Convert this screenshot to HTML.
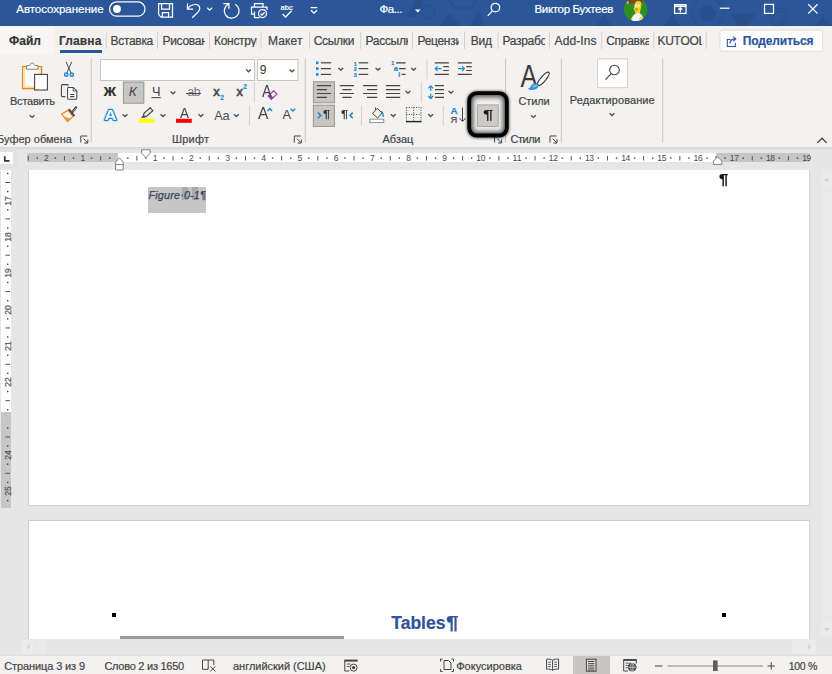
<!DOCTYPE html>
<html lang="ru"><head><meta charset="utf-8"><title>Word</title>
<style>
html,body{margin:0;padding:0;background:#e6e6e6;}
body{font-family:"Liberation Sans",sans-serif;color:#444;}
#app{position:relative;width:832px;height:674px;overflow:hidden;background:#e6e6e6;}
#app div{position:absolute;box-sizing:border-box;}
.t{white-space:nowrap;-webkit-text-stroke:0.200px currentColor;}
#ic{position:absolute;left:0;top:0;}

</style></head><body>
<div id="app">
<div style="left:0;top:0;width:832px;height:26px;background:#2b579a"></div>
<div style="left:0;top:26px;width:832px;height:121px;background:#f3f2f1"></div>
<div style="left:0;top:147px;width:832px;height:3px;background:linear-gradient(#d6d6d6,#e4e4e4)"></div>
<div style="left:0;top:26px;width:54px;height:29px;background:#f8f7f6"></div>
<div style="left:59.5px;top:50px;width:42px;height:2.5px;background:#2b579a"></div>
<!-- pages -->
<div style="left:28px;top:170px;width:782px;height:336px;background:#fff;border:1px solid #d0d0d0;border-top:none"></div>
<div style="left:28px;top:520px;width:782px;height:140px;background:#fff;border:1px solid #d0d0d0"></div>
<!-- selection -->
<div style="left:147.75px;top:187px;width:58.25px;height:25.75px;background:#c6c6c6"></div>
<div style="left:182.25px;top:187px;width:5.5px;height:13px;background:#a9a9a9"></div>
<div style="left:192px;top:187px;width:6.4px;height:13px;background:#a9a9a9"></div>
<!-- gray line p2 -->
<div style="left:120px;top:636px;width:224px;height:2.5px;background:#9c9c9c"></div>
<div style="left:112px;top:613px;width:4px;height:4px;background:#000"></div>
<div style="left:722px;top:613px;width:4px;height:4px;background:#000"></div>
<!-- h scrollbar + status -->
<div style="left:0;top:638.5px;width:832px;height:17px;background:#e6e6e6"></div>
<div style="left:0;top:655px;width:832px;height:19px;background:#f3f2f1;border-top:1px solid #e0dfde"></div>
<div style="left:572.5px;top:656px;width:37.5px;height:18px;background:#c8c6c4"></div>
<!-- rulers -->
<div style="left:0;top:150px;width:17px;height:17.500px;background:#e1e1e1"></div>
<div style="left:0;top:151.500px;width:13.300px;height:12.700px;background:#fbfbfb"></div>
<div style="left:27px;top:152.5px;width:783.5px;height:9px;background:#fff"></div>
<div style="left:27px;top:152.5px;width:91px;height:9px;background:#c6c6c6"></div>
<div style="left:715.6px;top:152.5px;width:94.900px;height:9px;background:#c6c6c6"></div>
<div style="left:1.3px;top:170.3px;width:10.200px;height:337.5px;background:#fff"></div>
<div style="left:1.3px;top:412.300px;width:10.200px;height:95.300px;background:#c6c6c6"></div>
<!-- v scrollbar -->
<div style="left:820.5px;top:167px;width:11.5px;height:471px;background:#e9e9e9"></div>

<svg id="ic" width="832" height="674" viewBox="0 0 832 674">
<g fill="#000" fill-opacity="0.080"><path d="M406 17l9-17h9l-8 17z"/><path d="M439 26l11-13 11 13z"/><path d="M471 26l7.500-16 7.500 16z"/><circle cx="707.400" cy="13.400" r="7.800"/><path d="M731 14h25l-8 12h-10z"/><path d="M663 26l9-11 9 11z"/><path d="M815 26l8-10 9 10z"/><path d="M560 0l8 12 8-12z"/><path d="M596 26l8-12 8 12z"/></g><g fill="none" stroke="#000" stroke-opacity="0.080" stroke-width="1.500"><circle cx="428" cy="12" r="6.500"/><circle cx="778.500" cy="17" r="9"/><circle cx="778.500" cy="17" r="5.500"/><path d="M449 0l6 8h16l6-8"/><path d="M690 13l8-13M725 13l-8-13M690 13l8 13M725 13l-8 13"/></g>
<g fill="none" stroke="#fff" stroke-width="1.250">
<rect x="109.6" y="1.9" width="35.4" height="14.3" rx="7.15"/>
<path d="M158.6 3.6h13.9v13.5h-11.4l-2.5-2.5z"/><path d="M161.6 3.6v5.4h7.9v-5.4M162.4 17.1v-4.4h6.2v4.4"/>
<path d="M187.500 3.200v5.900h5.700"/><path d="M187.900 8.800C190.500 3.800 199.700 2.400 199.800 8.600c0 3-4.800 6.200-7.600 9.200"/>
<path d="M207.3 7.8l2.4 2.4 2.4-2.4"/>
<path d="M223.400 3.700h5.500v5"/><path d="M228.800 3.900a7.400 7.400 0 1 0 6.400 0.300"/>
<path d="M254.5 7v-3.5h8.5v3.5M254.5 14h-3v-7h15.5v3M254.5 11.5v6h5"/><circle cx="262.5" cy="13.5" r="4"/><path d="M260.6 13.6l1.4 1.4 2.6-2.8"/>
<path d="M282.6 14l3 3 6-6.2"/>
<path d="M310.8 7.6h6.4M311 10.2l3 3 3-3"/>
<circle cx="495.4" cy="7.6" r="4.3"/><path d="M492.4 10.8l-4.6 5"/>
<rect x="674.6" y="4.6" width="11.4" height="8.8"/><path d="M674.6 6.2h11.4" stroke-width="1.8"/><path d="M680.3 12.3v-4M678.3 9.8l2-2 2 2"/>
<path d="M719.8 8.2h9.6"/><rect x="764.5" y="4.4" width="9" height="9"/><path d="M808.2 4.2l9.4 9.4M817.6 4.2l-9.4 9.4"/>
</g>
<circle cx="117" cy="9" r="3.9" fill="#fff"/>
<path d="M415 9.4h5.6l-2.8 3.2z" fill="#fff"/>
<clipPath id="av"><circle cx="635.600" cy="9.400" r="11.700"/></clipPath>
<g clip-path="url(#av)"><rect x="622" y="-3" width="28" height="26" fill="#30901f"/><path d="M627.500 -1h16l-0.500 3.200-4 0.600-3.500-0.300-4 1.300-4-0.300z" fill="#7a4a24"/><path d="M626.600 1.200l1.600-0.400 0.600 2.800-1.800 0.600z" fill="#d9a877"/><path d="M635.600 2.200c0.800-1.600 4.400-1.800 5.400 0 0.600 1.600 0.400 4.400-0.200 6.400-0.400 1.800-0.800 3.600-1 5h-4.800c0.200-1.400 0-2.400-0.600-3.200-1-0.800-1-2-0.400-2.600 0.400-1.400 0.800-3.600 1.600-5.600z" fill="#f7d21a"/><circle cx="636.300" cy="5.800" r="1.500" fill="#fafafa"/><circle cx="638.600" cy="5.600" r="1.200" fill="#f4f0e0"/><ellipse cx="636.300" cy="9.400" rx="1.800" ry="1.700" fill="#c8a15a"/><circle cx="636.800" cy="5.900" r="0.450" fill="#222"/><path d="M631.200 20.400c0.400-3.600 2.400-6.400 5.600-7.200 2.400-0.400 4.800 0.600 5.600 2.800 0.600 1.800 0.800 3.400 0.400 4.600-3.600 1.200-8 1.200-11.600-0.200z" fill="#f3f3f5"/><ellipse cx="641" cy="18.200" rx="1.700" ry="1.300" fill="#f7d21a"/><ellipse cx="631.800" cy="18.800" rx="0.900" ry="0.700" fill="#f7d21a"/></g>
<path d="M106.25 31.5V49" stroke="#d2d0ce" stroke-width="1"/>
<path d="M157.5 31.5V49" stroke="#d2d0ce" stroke-width="1"/>
<path d="M209.5 31.5V49" stroke="#d2d0ce" stroke-width="1"/>
<path d="M261 31.5V49" stroke="#d2d0ce" stroke-width="1"/>
<path d="M309.5 31.5V49" stroke="#d2d0ce" stroke-width="1"/>
<path d="M360.75 31.5V49" stroke="#d2d0ce" stroke-width="1"/>
<path d="M412.5 31.5V49" stroke="#d2d0ce" stroke-width="1"/>
<path d="M464.5 31.5V49" stroke="#d2d0ce" stroke-width="1"/>
<path d="M498 31.5V49" stroke="#d2d0ce" stroke-width="1"/>
<path d="M549.5 31.5V49" stroke="#d2d0ce" stroke-width="1"/>
<path d="M601.75 31.5V49" stroke="#d2d0ce" stroke-width="1"/>
<path d="M653.8 31.5V49" stroke="#d2d0ce" stroke-width="1"/>
<path d="M706.2 31.5V49" stroke="#d2d0ce" stroke-width="1"/>
<rect x="720" y="30.2" width="102.6" height="21" rx="2" fill="#fff" stroke="#e1dfdd" stroke-width="1"/>
<g fill="none" stroke="#2b579a" stroke-width="1.1"><path d="M730.5 39.5h-3.2v7h8v-3.5"/><path d="M729.8 43.5c0.5-3 2.5-4.6 5.5-4.6M733.2 36.6l2.6 2.3-2.6 2.3"/></g>
<path d="M91.2 58.5V142.5" stroke="#c8c6c4" stroke-width="1"/>
<path d="M305.3 58.5V142.5" stroke="#c8c6c4" stroke-width="1"/>
<path d="M505.6 58.5V142.5" stroke="#c8c6c4" stroke-width="1"/>
<path d="M561.4 58.5V142.5" stroke="#c8c6c4" stroke-width="1"/>
<path d="M662.7 58.5V142.5" stroke="#c8c6c4" stroke-width="1"/>
<path d="M254.4 82.5V102.4" stroke="#d2d0ce" stroke-width="1"/>
<path d="M249.5 106V125.2" stroke="#d2d0ce" stroke-width="1"/>
<path d="M361.5 106V125.2" stroke="#d2d0ce" stroke-width="1"/>
<path d="M427 59.7V79" stroke="#d2d0ce" stroke-width="1"/>
<path d="M421.3 82.5V102.4" stroke="#d2d0ce" stroke-width="1"/>
<path d="M443.3 106V125.2" stroke="#d2d0ce" stroke-width="1"/>
<g fill="none" stroke="#444" stroke-width="1"><path d="M80.8 142.5V136H87.3"/><path d="M83.39999999999999 138.6L87.8 143M87.8 139.4V143H84.2"/></g>
<g fill="none" stroke="#444" stroke-width="1"><path d="M294.3 142.5V136H300.8"/><path d="M296.90000000000003 138.6L301.3 143M301.3 139.4V143H297.7"/></g>
<g fill="none" stroke="#444" stroke-width="1"><path d="M494.6 142.5V136H501.1"/><path d="M497.20000000000005 138.6L501.6 143M501.6 139.4V143H498.0"/></g>
<g fill="none" stroke="#444" stroke-width="1"><path d="M550 142.5V136H556.5"/><path d="M552.6 138.6L557 143M557 139.4V143H553.4"/></g>
<path d="M817.300 142.900l4.700-4.700 4.700 4.700" fill="none" stroke="#444" stroke-width="1.300"/>
<rect x="100.5" y="59.5" width="154" height="21" fill="#fff" stroke="#c8c6c4"/>
<rect x="257.5" y="59.5" width="40.4" height="21" fill="#fff" stroke="#c8c6c4"/>
<path d="M29.70 115.20L32.10 117.40L34.50 115.20" fill="none" stroke="#505050" stroke-width="1.400"/>
<path d="M246.10 69.50L248.50 71.70L250.90 69.50" fill="none" stroke="#505050" stroke-width="1.400"/>
<path d="M289.50 69.50L291.90 71.70L294.30 69.50" fill="none" stroke="#505050" stroke-width="1.400"/>
<path d="M170.60 91.50L173.00 93.70L175.40 91.50" fill="none" stroke="#505050" stroke-width="1.400"/>
<path d="M122.60 114.30L125.00 116.50L127.40 114.30" fill="none" stroke="#505050" stroke-width="1.400"/>
<path d="M160.60 114.30L163.00 116.50L165.40 114.30" fill="none" stroke="#505050" stroke-width="1.400"/>
<path d="M198.50 114.30L200.90 116.50L203.30 114.30" fill="none" stroke="#505050" stroke-width="1.400"/>
<path d="M234.00 114.30L236.40 116.50L238.80 114.30" fill="none" stroke="#505050" stroke-width="1.400"/>
<path d="M338.40 67.90L340.80 70.10L343.20 67.90" fill="none" stroke="#505050" stroke-width="1.400"/>
<path d="M375.60 67.90L378.00 70.10L380.40 67.90" fill="none" stroke="#505050" stroke-width="1.400"/>
<path d="M411.20 67.90L413.60 70.10L416.00 67.90" fill="none" stroke="#505050" stroke-width="1.400"/>
<path d="M405.60 90.90L408.00 93.10L410.40 90.90" fill="none" stroke="#505050" stroke-width="1.400"/>
<path d="M448.60 90.90L451.00 93.10L453.40 90.90" fill="none" stroke="#505050" stroke-width="1.400"/>
<path d="M390.90 114.30L393.30 116.50L395.70 114.30" fill="none" stroke="#505050" stroke-width="1.400"/>
<path d="M428.30 114.30L430.70 116.50L433.10 114.30" fill="none" stroke="#505050" stroke-width="1.400"/>
<path d="M531.00 115.20L533.40 117.40L535.80 115.20" fill="none" stroke="#505050" stroke-width="1.400"/>
<path d="M609.60 113.30L612.00 115.50L614.40 113.30" fill="none" stroke="#505050" stroke-width="1.400"/>
<rect x="22.600" y="66.600" width="19" height="22" fill="#fafafa" stroke="#e8851e" stroke-width="1.300"/><rect x="24" y="68" width="16.200" height="19.200" fill="none" stroke="#f9dc92" stroke-width="1.500"/>
<path d="M26.600 69.200v-3.600h2.400c0.800 0 1.200-0.600 1.600-1.600 0.600-1.400 2.800-1.400 3.400 0 0.400 1 0.800 1.600 1.600 1.600h2.400v3.600z" fill="#fdfdfd" stroke="#828282" stroke-width="1"/>
<rect x="34.6" y="74.4" width="12.8" height="15.6" fill="#fff" stroke="#444" stroke-width="1.1"/>
<g fill="none" stroke="#444" stroke-width="0.950"><path d="M66.100 61.800l4.900 11.200M71.700 61.800l-4.900 11.200"/></g>
<circle cx="66.200" cy="74.700" r="1.750" fill="#9fd0f0" stroke="#1e8bcd" stroke-width="1.300"/><circle cx="71.800" cy="74.700" r="1.750" fill="#9fd0f0" stroke="#1e8bcd" stroke-width="1.300"/>
<g fill="none" stroke="#444" stroke-width="1.050"><path d="M65.400 96.600h-2.800a1.200 1.200 0 0 1-1.200-1.200v-9.600a1.200 1.200 0 0 1 1.200-1.200h4.600a1.200 1.200 0 0 1 1.200 1.200"/><path d="M68.600 87.400h4.600l3.600 3.600v7.200a1 1 0 0 1-1 1h-7.200a1 1 0 0 1-1-1v-9.800a1 1 0 0 1 1-1z" fill="#fff"/><path d="M73.200 87.600v3.400h3.400" stroke-width="0.900"/><path d="M70 94.400h4.400M70 96.600h4.400"/></g>
<path d="M61.600 114l6.600-3.600 4.800 6-5.400 5.200z" fill="#fdf3e4" stroke="#e8821e" stroke-width="1.200" stroke-linejoin="round"/><path d="M63.400 116.200l6.600 2.400-2.600 2.600z" fill="#f0963c"/>
<path d="M68 109.800l1.500-1.200 5.600 6.800-1.500 1.200z" fill="#444"/><path d="M72.200 112.200l3.900-4.900" stroke="#444" stroke-width="2.200" stroke-linecap="round"/><path d="M72.800 111.900l3-3.800" stroke="#bbb" stroke-width="0.700"/>
<rect x="123.400" y="82" width="20.400" height="21.200" fill="#c8c6c4" stroke="#969492"/>
<path d="M151.4 97.6h9.4" stroke="#444" stroke-width="1"/>
<path d="M268.200 96l5.500-5.200 3.200 3.300-5.500 5.200z" fill="#fff" stroke="#a23fb5" stroke-width="1.250" stroke-linejoin="round"/><path d="M268.200 96l2-1.900 3.200 3.300-2 1.900z" fill="#a23fb5"/>
<text x="104.400" y="119.800" font-family="Liberation Sans, sans-serif" font-weight="bold" font-size="15.500" fill="#fff" stroke="#1e8bcd" stroke-width="2.600" stroke-linejoin="round" paint-order="stroke" textLength="11.800" lengthAdjust="spacingAndGlyphs">A</text>
<path d="M143.400 115.600l0.600-2.200 6.200-5.600 2.600 2.800-6.200 5.600-2.200 0.400z" fill="none" stroke="#444" stroke-width="1.200"/><path d="M140.800 117.800l2.800-2.800 2.200 2-1.800 0.800z" fill="#444"/>
<rect x="138.9" y="118.8" width="15.6" height="4" fill="#ffff00"/>
<rect x="176" y="118.8" width="15.8" height="4" fill="#ff0000"/>
<path d="M267.500 111.100l2.300-2.400 2.300 2.400" fill="none" stroke="#1e8bcd" stroke-width="1.500"/>
<path d="M290.600 108.700l2.300 2.300 2.300-2.300" fill="none" stroke="#1e8bcd" stroke-width="1.500"/>
<rect x="316" y="61.5" width="2.6" height="2.6" fill="#1e8bcd"/><path d="M321 62.8h10" stroke="#444" stroke-width="1.200"/>
<path d="M358.6 62.8h9.6" stroke="#444" stroke-width="1.200"/>
<rect x="316" y="67.3" width="2.6" height="2.6" fill="#1e8bcd"/><path d="M321 68.6h10" stroke="#444" stroke-width="1.200"/>
<path d="M358.6 68.6h9.6" stroke="#444" stroke-width="1.200"/>
<rect x="316" y="73.10000000000001" width="2.6" height="2.6" fill="#1e8bcd"/><path d="M321 74.4h10" stroke="#444" stroke-width="1.200"/>
<path d="M358.6 74.4h9.6" stroke="#444" stroke-width="1.200"/>
<path d="M396 62.8h9.6M399 68.6h6.6M401.6 74.4h4" stroke="#444" stroke-width="1.200"/>
<path d="M434.8 62.8h14M434.8 74.4h14M443.2 66.7h5.6M443.2 70.5h5.6" stroke="#444" stroke-width="1.200"/>
<path d="M435.2 68.6h6.4M437.6 66.2l-2.4 2.4 2.4 2.4" fill="none" stroke="#1e8bcd" stroke-width="1.1"/>
<path d="M457.8 62.8h14M457.8 74.4h14M466.2 66.7h5.6M466.2 70.5h5.6" stroke="#444" stroke-width="1.200"/>
<path d="M458.0 68.6h6.4M462.0 66.2l2.4 2.4-2.4 2.4" fill="none" stroke="#1e8bcd" stroke-width="1.1"/>
<rect x="313.4" y="81.8" width="21" height="21" fill="#c8c6c4" stroke="#969492"/>
<rect x="313.4" y="105.2" width="21" height="21.2" fill="#c8c6c4" stroke="#969492"/>
<path d="M316.8 85.7h14.2M316.8 89.6h10.2M316.8 93.5h14.2M316.8 97.4h10.2" stroke="#444" stroke-width="1.200"/>
<path d="M339.8 85.7h14.2M342.4 89.6h9.2M339.8 93.5h14.2M342.4 97.4h9.2" stroke="#444" stroke-width="1.200"/>
<path d="M363 85.7h14.2M367 89.6h10.2M363 93.5h14.2M367 97.4h10.2" stroke="#444" stroke-width="1.200"/>
<path d="M386 85.7h14.2M386 89.6h14.2M386 93.5h14.2M386 97.4h14.2" stroke="#444" stroke-width="1.200"/>
<path d="M435 85.7h9M435 89.6h9M435 93.5h9M435 97.4h9" stroke="#444" stroke-width="1.200"/>
<path d="M430.7 86v5M430.700 93.400v5M428.300 88.400l2.400-2.600 2.400 2.600M428.300 96l2.400 2.600 2.400-2.600" fill="none" stroke="#1e8bcd" stroke-width="1.2"/>
<path d="M318 112.600l2.800 2.800-2.800 2.800" fill="none" stroke="#1e8bcd" stroke-width="1.600"/>
<path d="M352.800 112.600l-2.800 2.800 2.800 2.800" fill="none" stroke="#1e8bcd" stroke-width="1.600"/>
<path d="M372.6 113.4l4.6-5 5 4.6-4.6 5z" fill="none" stroke="#444" stroke-width="1"/><path d="M375.6 110v-2.6" stroke="#444" stroke-width="1"/><path d="M381 111.4c1.8 1 2.4 3 2 5.4" fill="none" stroke="#1e8bcd" stroke-width="1.4"/>
<rect x="369.8" y="119.2" width="14" height="3.4" fill="#fff" stroke="#8a8886" stroke-width="0.9"/>
<g stroke="#444" stroke-width="1" stroke-dasharray="1 1.4" fill="none"><path d="M406.4 107.5h14.6M406.4 114.4h14.6M406.4 107.5v14M413.7 107.5v14M421 107.5v14"/></g><path d="M405.9 121.6h15.6" stroke="#222" stroke-width="1.4"/>
<path d="M462.5 107.6v13.6M459.5 118.2l3 3.2 3-3.2" fill="none" stroke="#444" stroke-width="1"/>
<defs><filter id="b1" x="-30%" y="-30%" width="160%" height="160%"><feGaussianBlur stdDeviation="1.300"/></filter><filter id="b2" x="-30%" y="-30%" width="160%" height="160%"><feGaussianBlur stdDeviation="2.600"/></filter><clipPath id="rin"><rect x="470.500" y="94.500" width="35" height="39.700" rx="5.500"/></clipPath></defs>
<rect x="468.500" y="92.700" width="39" height="43.800" rx="8" fill="none" stroke="#000" stroke-opacity="0.450" stroke-width="4.500" filter="url(#b1)"/>
<rect x="469.200" y="93.200" width="37.600" height="42.300" rx="7.500" fill="#efeeed"/>
<g clip-path="url(#rin)"><rect x="468" y="92" width="40" height="45" rx="8" fill="none" stroke="#000" stroke-opacity="0.750" stroke-width="9.500" filter="url(#b2)"/></g>
<rect x="469.200" y="93.200" width="37.600" height="42.300" rx="7.500" fill="none" stroke="#000" stroke-width="3.800"/>
<rect x="477.500" y="104.900" width="20.700" height="21.500" fill="#cdcbca" stroke="#a8a6a4"/>
<text transform="translate(520.500 86.900) scale(0.800 1)" font-family="Liberation Sans, sans-serif" font-size="31.500" fill="#3b3a39">A</text>
<path d="M549 72.400c-1.400-1-4.600 1.400-8 5.400-2.400 2.800-3.600 5-3.800 6.400l1.800 1.400c1.600-0.400 3.800-2 6.200-5 3.200-4 4.800-7 3.800-8.200z" fill="#fff" stroke="#3a3a3a" stroke-width="1.150"/>
<path d="M536.800 83.600c-3.400-0.800-5.400 0.800-6.200 2.800-0.400 1.200-1.400 2-2.900 2.300 2.600 2 9.400 2 11.300-3z" fill="#3a8fdd"/><path d="M536.400 84.800c-2.200-0.400-3.800 0.600-4.400 2.200 1.800 1 4.400 0.400 5.600-1.400z" fill="#7fbaee"/>
<rect x="597.5" y="58.9" width="30" height="28.8" fill="#fff" stroke="#d2d0ce"/>
<circle cx="614.5" cy="70" r="4.8" fill="none" stroke="#444" stroke-width="1.1"/><path d="M611.2 73.6l-5.8 6" stroke="#444" stroke-width="1.1"/>
<path d="M4.800 156.200v4.700h4.700" fill="none" stroke="#333" stroke-width="1.700"/>
<path d="M28.25 156v4.500" stroke="#555" stroke-width="1"/>
<rect x="36.60" y="157.400" width="1.400" height="1.400" fill="#444"/>
<rect x="54.70" y="157.400" width="1.400" height="1.400" fill="#444"/>
<path d="M64.45 156v4.500" stroke="#555" stroke-width="1"/>
<rect x="72.80" y="157.400" width="1.400" height="1.400" fill="#444"/>
<rect x="90.90" y="157.400" width="1.400" height="1.400" fill="#444"/>
<path d="M100.65 156v4.500" stroke="#555" stroke-width="1"/>
<rect x="109.00" y="157.400" width="1.400" height="1.400" fill="#444"/>
<rect x="127.10" y="157.400" width="1.400" height="1.400" fill="#444"/>
<path d="M136.85 156v4.500" stroke="#555" stroke-width="1"/>
<rect x="145.20" y="157.400" width="1.400" height="1.400" fill="#444"/>
<rect x="163.30" y="157.400" width="1.400" height="1.400" fill="#444"/>
<path d="M173.05 156v4.500" stroke="#555" stroke-width="1"/>
<rect x="181.40" y="157.400" width="1.400" height="1.400" fill="#444"/>
<rect x="199.50" y="157.400" width="1.400" height="1.400" fill="#444"/>
<path d="M209.25 156v4.500" stroke="#555" stroke-width="1"/>
<rect x="217.60" y="157.400" width="1.400" height="1.400" fill="#444"/>
<rect x="235.70" y="157.400" width="1.400" height="1.400" fill="#444"/>
<path d="M245.45 156v4.500" stroke="#555" stroke-width="1"/>
<rect x="253.80" y="157.400" width="1.400" height="1.400" fill="#444"/>
<rect x="271.90" y="157.400" width="1.400" height="1.400" fill="#444"/>
<path d="M281.65 156v4.500" stroke="#555" stroke-width="1"/>
<rect x="290.00" y="157.400" width="1.400" height="1.400" fill="#444"/>
<rect x="308.10" y="157.400" width="1.400" height="1.400" fill="#444"/>
<path d="M317.85 156v4.500" stroke="#555" stroke-width="1"/>
<rect x="326.20" y="157.400" width="1.400" height="1.400" fill="#444"/>
<rect x="344.30" y="157.400" width="1.400" height="1.400" fill="#444"/>
<path d="M354.05 156v4.500" stroke="#555" stroke-width="1"/>
<rect x="362.40" y="157.400" width="1.400" height="1.400" fill="#444"/>
<rect x="380.50" y="157.400" width="1.400" height="1.400" fill="#444"/>
<path d="M390.25 156v4.500" stroke="#555" stroke-width="1"/>
<rect x="398.60" y="157.400" width="1.400" height="1.400" fill="#444"/>
<rect x="416.70" y="157.400" width="1.400" height="1.400" fill="#444"/>
<path d="M426.45 156v4.500" stroke="#555" stroke-width="1"/>
<rect x="434.80" y="157.400" width="1.400" height="1.400" fill="#444"/>
<rect x="452.90" y="157.400" width="1.400" height="1.400" fill="#444"/>
<path d="M462.65 156v4.500" stroke="#555" stroke-width="1"/>
<rect x="471.00" y="157.400" width="1.400" height="1.400" fill="#444"/>
<rect x="489.10" y="157.400" width="1.400" height="1.400" fill="#444"/>
<path d="M498.85 156v4.500" stroke="#555" stroke-width="1"/>
<rect x="507.20" y="157.400" width="1.400" height="1.400" fill="#444"/>
<rect x="525.30" y="157.400" width="1.400" height="1.400" fill="#444"/>
<path d="M535.05 156v4.500" stroke="#555" stroke-width="1"/>
<rect x="543.40" y="157.400" width="1.400" height="1.400" fill="#444"/>
<rect x="561.50" y="157.400" width="1.400" height="1.400" fill="#444"/>
<path d="M571.25 156v4.500" stroke="#555" stroke-width="1"/>
<rect x="579.60" y="157.400" width="1.400" height="1.400" fill="#444"/>
<rect x="597.70" y="157.400" width="1.400" height="1.400" fill="#444"/>
<path d="M607.45 156v4.500" stroke="#555" stroke-width="1"/>
<rect x="615.80" y="157.400" width="1.400" height="1.400" fill="#444"/>
<rect x="633.90" y="157.400" width="1.400" height="1.400" fill="#444"/>
<path d="M643.65 156v4.500" stroke="#555" stroke-width="1"/>
<rect x="652.00" y="157.400" width="1.400" height="1.400" fill="#444"/>
<rect x="670.10" y="157.400" width="1.400" height="1.400" fill="#444"/>
<path d="M679.85 156v4.500" stroke="#555" stroke-width="1"/>
<rect x="688.20" y="157.400" width="1.400" height="1.400" fill="#444"/>
<rect x="706.30" y="157.400" width="1.400" height="1.400" fill="#444"/>
<path d="M716.05 156v4.500" stroke="#555" stroke-width="1"/>
<rect x="724.40" y="157.400" width="1.400" height="1.400" fill="#444"/>
<rect x="742.50" y="157.400" width="1.400" height="1.400" fill="#444"/>
<path d="M752.25 156v4.500" stroke="#555" stroke-width="1"/>
<rect x="760.60" y="157.400" width="1.400" height="1.400" fill="#444"/>
<rect x="778.70" y="157.400" width="1.400" height="1.400" fill="#444"/>
<path d="M788.45 156v4.500" stroke="#555" stroke-width="1"/>
<rect x="796.80" y="157.400" width="1.400" height="1.400" fill="#444"/>
<rect x="7" y="172.74" width="1.400" height="1.400" fill="#444"/>
<path d="M5.4 182.52h4.6" stroke="#555" stroke-width="1"/>
<rect x="7" y="190.91" width="1.400" height="1.400" fill="#444"/>
<rect x="7" y="209.09" width="1.400" height="1.400" fill="#444"/>
<path d="M5.4 218.88h4.6" stroke="#555" stroke-width="1"/>
<rect x="7" y="227.26" width="1.400" height="1.400" fill="#444"/>
<rect x="7" y="245.44" width="1.400" height="1.400" fill="#444"/>
<path d="M5.4 255.22h4.6" stroke="#555" stroke-width="1"/>
<rect x="7" y="263.61" width="1.400" height="1.400" fill="#444"/>
<rect x="7" y="281.79" width="1.400" height="1.400" fill="#444"/>
<path d="M5.4 291.57h4.6" stroke="#555" stroke-width="1"/>
<rect x="7" y="299.96" width="1.400" height="1.400" fill="#444"/>
<rect x="7" y="318.14" width="1.400" height="1.400" fill="#444"/>
<path d="M5.4 327.93h4.6" stroke="#555" stroke-width="1"/>
<rect x="7" y="336.31" width="1.400" height="1.400" fill="#444"/>
<rect x="7" y="354.49" width="1.400" height="1.400" fill="#444"/>
<path d="M5.4 364.27h4.6" stroke="#555" stroke-width="1"/>
<rect x="7" y="372.66" width="1.400" height="1.400" fill="#444"/>
<rect x="7" y="390.84" width="1.400" height="1.400" fill="#444"/>
<path d="M5.4 400.62h4.6" stroke="#555" stroke-width="1"/>
<rect x="7" y="409.01" width="1.400" height="1.400" fill="#444"/>
<rect x="7" y="427.19" width="1.400" height="1.400" fill="#444"/>
<path d="M5.4 436.98h4.6" stroke="#555" stroke-width="1"/>
<rect x="7" y="445.36" width="1.400" height="1.400" fill="#444"/>
<rect x="7" y="463.54" width="1.400" height="1.400" fill="#444"/>
<path d="M5.4 473.32h4.6" stroke="#555" stroke-width="1"/>
<rect x="7" y="481.71" width="1.400" height="1.400" fill="#444"/>
<rect x="7" y="499.89" width="1.400" height="1.400" fill="#444"/>
<path d="M115.6 170v-7.6l3.800-4.600 3.800 4.600v7.600z M115.600 164.600h7.600" fill="#fff" stroke="#777" stroke-width="0.9"/>
<path d="M141.6 149.800h8.600v3.400l-4.300 4.600-4.300-4.600z" fill="#fff" stroke="#777" stroke-width="0.9"/>
<path d="M713.4 164.400v-3.200l4.200-4.400 4.200 4.400v3.200z" fill="#fff" stroke="#777" stroke-width="0.9"/>
<rect x="820.5" y="173.400" width="11.5" height="12.300" fill="#ececec"/><path d="M823.600 181.200l3.100-3.600 3.100 3.600z" fill="#d4d4d4"/>
<rect x="820.5" y="622.500" width="11.5" height="13.500" fill="#ececec"/><path d="M823.600 628l3.100 3.600 3.100-3.600z" fill="#d4d4d4"/>
<rect x="21.600" y="640" width="13" height="14" fill="#ececec"/><rect x="35" y="640" width="11" height="14" fill="#eaeaea"/><path d="M29.600 643.500l-3.200 3.200 3.200 3.200z" fill="#d8d8d8"/>
<rect x="792" y="640" width="24" height="14" fill="#ececec"/><path d="M808 643.500l3.200 3.200-3.200 3.200z" fill="#d8d8d8"/>
<g fill="none" stroke="#444" stroke-width="1"><path d="M208.200 669.300h-5.700v-9.300h5.700zM208.200 660h5.600v5.200"/><path d="M210.200 666.300l5.200 5.200M215.400 666.300l-5.200 5.200"/></g>
<g fill="none" stroke="#444" stroke-width="1"><path d="M344.3 660.600h13.400" stroke-width="2"/><path d="M344.8 660.500v10.500h4.500"/><path d="M346.8 664h3.500M346.8 666.500h2.500" stroke-width="0.9"/><circle cx="353.6" cy="667.600" r="3.500"/></g><circle cx="353.6" cy="667.600" r="1.700" fill="#444"/>
<g fill="none" stroke="#444" stroke-width="1"><path d="M444 660.500h4.500l2.500 2.500v6.500h-7z"/><path d="M440.500 661.500v-2.500h2M453.500 661.500v-2.500h-2M440.500 669v2.500h2M453.500 669v2.500h-2"/></g>
<g fill="none" stroke="#444" stroke-width="1"><path d="M552.600 660.200v10.200M546.600 659.200c2.400-0.300 4.600 0 6 1 1.400-1 3.600-1.300 6-1v10c-2.400-0.300-4.600 0-6 1-1.400-1-3.600-1.300-6-1z"/><path d="M548.200 662.200h2.800M548.200 664.400h2.800M548.200 666.600h2.800M554.200 662.200h2.800M554.200 664.400h2.800M554.200 666.600h2.800" stroke-width="0.8"/></g>
<g fill="none" stroke="#444" stroke-width="1"><rect x="586.400" y="659.200" width="9.600" height="12" fill="#dddbda"/><path d="M588 661.500h6.400M588 663.700h6.400M588 665.900h6.400M588 668.100h6.400M588 670h6.400" stroke-width="1"/></g>
<g fill="none" stroke="#444" stroke-width="1"><path d="M623.600 660h12.800" stroke-width="1.800"/><path d="M628 671h-4.300v-11.500h12.600v4"/><path d="M625.500 663.200h6M625.500 665.500h3.500M625.500 667.800h2.500" stroke-width="0.8"/></g><circle cx="632.200" cy="667.300" r="4.300" fill="#444"/><path d="M628.200 667.300h8M632.200 663.200v8.200" stroke="#f3f2f1" stroke-width="0.600"/><ellipse cx="632.200" cy="667.300" rx="1.900" ry="4" fill="none" stroke="#f3f2f1" stroke-width="0.500"/>
<path d="M655 666h7.500M767.500 666h7.500M771.250 662.300v7.400" stroke="#444" stroke-width="1"/><path d="M667.400 666h95.600" stroke="#8a8886" stroke-width="1"/><rect x="713" y="660.400" width="4.600" height="10.600" fill="#605e5c"/>
</svg>
<div class="t" style="left:16.25px;top:4.00px;font-size:11.5px;line-height:11.5px;letter-spacing:-0.030px;color:#fff;">Автосохранение</div>
<div class="t" style="left:379.50px;top:4.00px;font-size:11.5px;line-height:11.5px;letter-spacing:-0.447px;color:#fff;">Фа...</div>
<div class="t" style="left:534.50px;top:4.00px;font-size:11.5px;line-height:11.5px;letter-spacing:-0.328px;color:#fff;">Виктор Бухтеев</div>
<div class="t" style="left:280.50px;top:4.00px;font-size:7.5px;line-height:7.5px;letter-spacing:0.135px;color:#fff;">abc</div>
<div class="t" style="left:9.00px;top:35.00px;font-size:12px;line-height:12px;letter-spacing:0.020px;font-weight:bold;color:#333;">Файл</div>
<div class="t" style="left:59.00px;top:35.00px;font-size:12px;line-height:12px;letter-spacing:0.115px;font-weight:bold;color:#3b3a39;">Главна</div>
<div class="t" style="left:110.50px;top:35.00px;font-size:12px;line-height:12px;letter-spacing:-0.301px;">Вставка</div>
<div class="t" style="left:162.50px;top:35.00px;font-size:12px;line-height:12px;letter-spacing:-0.300px;width:42.50px;overflow:hidden;">Рисование</div>
<div class="t" style="left:214.00px;top:35.00px;font-size:12px;line-height:12px;letter-spacing:-0.300px;width:43.00px;overflow:hidden;">Конструктор</div>
<div class="t" style="left:268.00px;top:35.00px;font-size:12px;line-height:12px;letter-spacing:0.106px;">Макет</div>
<div class="t" style="left:313.75px;top:35.00px;font-size:12px;line-height:12px;letter-spacing:-0.333px;">Ссылки</div>
<div class="t" style="left:365.50px;top:35.00px;font-size:12px;line-height:12px;letter-spacing:-0.300px;width:42.50px;overflow:hidden;">Рассылки</div>
<div class="t" style="left:417.50px;top:35.00px;font-size:12px;line-height:12px;letter-spacing:-0.300px;width:41.50px;overflow:hidden;">Рецензирование</div>
<div class="t" style="left:470.80px;top:35.00px;font-size:12px;line-height:12px;letter-spacing:-0.300px;">Вид</div>
<div class="t" style="left:502.50px;top:35.00px;font-size:12px;line-height:12px;letter-spacing:-0.300px;width:42.50px;overflow:hidden;">Разработчик</div>
<div class="t" style="left:554.50px;top:35.00px;font-size:12px;line-height:12px;letter-spacing:0.127px;">Add-Ins</div>
<div class="t" style="left:606.25px;top:35.00px;font-size:12px;line-height:12px;letter-spacing:-0.300px;width:42.50px;overflow:hidden;">Справка</div>
<div class="t" style="left:657.50px;top:35.00px;font-size:12px;line-height:12px;letter-spacing:-0.300px;width:44.30px;overflow:hidden;">KUTOOLS</div>
<div class="t" style="left:742.70px;top:35.00px;font-size:12px;line-height:12px;letter-spacing:-0.123px;font-weight:bold;color:#2b579a;">Поделиться</div>
<div class="t" style="left:10.00px;top:96.00px;font-size:11px;line-height:11px;letter-spacing:-0.230px;">Вставить</div>
<div class="t" style="left:-3.00px;top:134.00px;font-size:11px;line-height:11px;letter-spacing:0.021px;">Буфер обмена</div>
<div class="t" style="left:172.00px;top:134.00px;font-size:11px;line-height:11px;letter-spacing:0.199px;">Шрифт</div>
<div class="t" style="left:382.50px;top:134.00px;font-size:11px;line-height:11px;letter-spacing:0.008px;">Абзац</div>
<div class="t" style="left:518.40px;top:96.00px;font-size:11px;line-height:11px;letter-spacing:-0.081px;">Стили</div>
<div class="t" style="left:510.50px;top:134.00px;font-size:11px;line-height:11px;letter-spacing:-0.441px;">Стили</div>
<div class="t" style="left:569.80px;top:95.00px;font-size:11px;line-height:11px;letter-spacing:0.086px;">Редактирование</div>
<div class="t" style="left:259.80px;top:64.00px;font-size:12px;line-height:12px;color:#333;-webkit-text-stroke:0;">9</div>
<div class="t" style="left:103.70px;top:85.00px;font-size:13.5px;line-height:13.5px;font-weight:bold;color:#2a2a2a;">Ж</div>
<div class="t" style="left:128.70px;top:85.00px;font-size:13.5px;line-height:13.5px;font-style:italic;-webkit-text-stroke:0;">К</div>
<div class="t" style="left:152.00px;top:86.00px;font-size:12.8px;line-height:12.8px;-webkit-text-stroke:0;">Ч</div>
<div class="t" style="left:187.50px;top:86.00px;font-size:12px;line-height:12px;letter-spacing:-0.430px;color:#777;-webkit-text-stroke:0;">ab</div>
<div class="t" style="left:213.30px;top:85.00px;font-size:13px;line-height:13px;-webkit-text-stroke:0.550px currentColor;">x</div>
<div class="t" style="left:220.30px;top:95.00px;font-size:6.5px;line-height:6.5px;letter-spacing:-0.325px;font-weight:bold;color:#1e8bcd;">2</div>
<div class="t" style="left:236.60px;top:85.00px;font-size:13px;line-height:13px;-webkit-text-stroke:0.550px currentColor;">x</div>
<div class="t" style="left:243.30px;top:84.00px;font-size:6.5px;line-height:6.5px;letter-spacing:-0.225px;font-weight:bold;color:#1e8bcd;">2</div>
<div class="t" style="left:261.50px;top:83.00px;font-size:17px;line-height:17px;-webkit-text-stroke:0;transform:scaleX(0.860);transform-origin:0 0;">A</div>
<div class="t" style="left:179.80px;top:106.00px;font-size:14.6px;line-height:14.6px;-webkit-text-stroke:0;transform:scaleX(0.920);transform-origin:0 0;">A</div>
<div class="t" style="left:214.20px;top:110.00px;font-size:12.8px;line-height:12.8px;letter-spacing:-0.228px;color:#505050;-webkit-text-stroke:0;">Aa</div>
<div class="t" style="left:257.70px;top:106.00px;font-size:16px;line-height:16px;-webkit-text-stroke:0;transform:scaleX(0.970);transform-origin:0 0;">A</div>
<div class="t" style="left:282.40px;top:109.00px;font-size:12.8px;line-height:12.8px;-webkit-text-stroke:0;">A</div>
<div class="t" style="left:322.90px;top:109.00px;font-size:10.8px;line-height:10.8px;color:#333;transform:scaleX(1.250);transform-origin:0 0;">¶</div>
<div class="t" style="left:341.00px;top:109.00px;font-size:10.8px;line-height:10.8px;color:#333;transform:scaleX(1.250);transform-origin:0 0;">¶</div>
<div class="t" style="left:482.70px;top:108.00px;font-size:13.5px;line-height:13.5px;color:#1a1a1a;transform:scaleX(1.420);transform-origin:0 0;">¶</div>
<div class="t" style="left:450.60px;top:106.00px;font-size:9.8px;line-height:9.8px;font-weight:bold;color:#1e8bcd;">A</div>
<div class="t" style="left:450.60px;top:116.00px;font-size:9.3px;line-height:9.3px;">Я</div>
<div class="t" style="left:353.80px;top:62.00px;font-size:5.5px;line-height:5.5px;letter-spacing:-0.262px;font-weight:bold;color:#1e8bcd;">1</div>
<div class="t" style="left:353.80px;top:67.00px;font-size:5.5px;line-height:5.5px;letter-spacing:-0.262px;font-weight:bold;color:#1e8bcd;">2</div>
<div class="t" style="left:353.80px;top:73.00px;font-size:5.5px;line-height:5.5px;letter-spacing:-0.262px;font-weight:bold;color:#1e8bcd;">3</div>
<div class="t" style="left:391.30px;top:61.00px;font-size:5.5px;line-height:5.5px;letter-spacing:-0.363px;font-weight:bold;color:#1e8bcd;">1</div>
<div class="t" style="left:393.80px;top:65.00px;font-size:7.5px;line-height:7.5px;font-weight:bold;color:#1e8bcd;">a</div>
<div class="t" style="left:398.20px;top:71.00px;font-size:7px;line-height:7px;font-weight:bold;color:#1e8bcd;">i</div>
<div class="t" style="left:4.30px;top:661.00px;font-size:11px;line-height:11px;letter-spacing:-0.117px;">Страница 3 из 9</div>
<div class="t" style="left:104.40px;top:661.00px;font-size:11px;line-height:11px;letter-spacing:-0.259px;">Слово 2 из 1650</div>
<div class="t" style="left:233.00px;top:661.00px;font-size:11px;line-height:11px;letter-spacing:-0.027px;">английский (США)</div>
<div class="t" style="left:456.25px;top:661.00px;font-size:11px;line-height:11px;">Фокусировка</div>
<div class="t" style="left:788.80px;top:661.00px;font-size:10.5px;line-height:10.5px;letter-spacing:-0.316px;">100 %</div>
<div class="t" style="left:148.50px;top:190.00px;font-size:10.8px;line-height:10.8px;letter-spacing:0.172px;font-style:italic;color:#3a465c;-webkit-text-stroke:0.250px #3a465c;">Figure·0-1¶</div>
<div class="t" style="left:718.70px;top:172.00px;font-size:14px;line-height:14px;font-weight:bold;color:#111;transform:scaleX(1.200);transform-origin:0 0;">¶</div>
<div class="t" style="left:391.25px;top:615.00px;font-size:17.5px;line-height:17.5px;letter-spacing:0.018px;font-weight:bold;color:#2f5496;">Tables</div>
<div class="t" style="left:445.80px;top:615.00px;font-size:17.5px;line-height:17.5px;font-weight:bold;color:#2f5496;transform:scaleX(1.300);transform-origin:0 0;">¶</div>
<div class="t" style="left:44.05px;top:154.00px;font-size:8.5px;line-height:8.5px;letter-spacing:-0.334px;color:#4a4a4a;-webkit-text-stroke:0;">2</div>
<div class="t" style="left:80.60px;top:154.00px;font-size:8.5px;line-height:8.5px;letter-spacing:-0.334px;color:#4a4a4a;-webkit-text-stroke:0;">1</div>
<div class="t" style="left:152.75px;top:154.00px;font-size:8.5px;line-height:8.5px;letter-spacing:-0.334px;color:#4a4a4a;-webkit-text-stroke:0;">1</div>
<div class="t" style="left:188.95px;top:154.00px;font-size:8.5px;line-height:8.5px;letter-spacing:-0.334px;color:#4a4a4a;-webkit-text-stroke:0;">2</div>
<div class="t" style="left:225.15px;top:154.00px;font-size:8.5px;line-height:8.5px;letter-spacing:-0.334px;color:#4a4a4a;-webkit-text-stroke:0;">3</div>
<div class="t" style="left:261.35px;top:154.00px;font-size:8.5px;line-height:8.5px;letter-spacing:-0.334px;color:#4a4a4a;-webkit-text-stroke:0;">4</div>
<div class="t" style="left:297.55px;top:154.00px;font-size:8.5px;line-height:8.5px;letter-spacing:-0.334px;color:#4a4a4a;-webkit-text-stroke:0;">5</div>
<div class="t" style="left:333.75px;top:154.00px;font-size:8.5px;line-height:8.5px;letter-spacing:-0.334px;color:#4a4a4a;-webkit-text-stroke:0;">6</div>
<div class="t" style="left:369.95px;top:154.00px;font-size:8.5px;line-height:8.5px;letter-spacing:-0.334px;color:#4a4a4a;-webkit-text-stroke:0;">7</div>
<div class="t" style="left:406.15px;top:154.00px;font-size:8.5px;line-height:8.5px;letter-spacing:-0.334px;color:#4a4a4a;-webkit-text-stroke:0;">8</div>
<div class="t" style="left:442.35px;top:154.00px;font-size:8.5px;line-height:8.5px;letter-spacing:-0.334px;color:#4a4a4a;-webkit-text-stroke:0;">9</div>
<div class="t" style="left:476.35px;top:154.00px;font-size:8.5px;line-height:8.5px;letter-spacing:-0.334px;color:#4a4a4a;-webkit-text-stroke:0;">10</div>
<div class="t" style="left:512.55px;top:154.00px;font-size:8.5px;line-height:8.5px;letter-spacing:-0.014px;color:#4a4a4a;-webkit-text-stroke:0;">11</div>
<div class="t" style="left:548.75px;top:154.00px;font-size:8.5px;line-height:8.5px;letter-spacing:-0.334px;color:#4a4a4a;-webkit-text-stroke:0;">12</div>
<div class="t" style="left:584.95px;top:154.00px;font-size:8.5px;line-height:8.5px;letter-spacing:-0.334px;color:#4a4a4a;-webkit-text-stroke:0;">13</div>
<div class="t" style="left:621.15px;top:154.00px;font-size:8.5px;line-height:8.5px;letter-spacing:-0.334px;color:#4a4a4a;-webkit-text-stroke:0;">14</div>
<div class="t" style="left:657.35px;top:154.00px;font-size:8.5px;line-height:8.5px;letter-spacing:-0.334px;color:#4a4a4a;-webkit-text-stroke:0;">15</div>
<div class="t" style="left:693.55px;top:154.00px;font-size:8.5px;line-height:8.5px;letter-spacing:-0.334px;color:#4a4a4a;-webkit-text-stroke:0;">16</div>
<div class="t" style="left:729.75px;top:154.00px;font-size:8.5px;line-height:8.5px;letter-spacing:-0.334px;color:#4a4a4a;-webkit-text-stroke:0;">17</div>
<div class="t" style="left:765.95px;top:154.00px;font-size:8.5px;line-height:8.5px;letter-spacing:-0.334px;color:#4a4a4a;-webkit-text-stroke:0;">18</div>
<div class="t" style="left:802.15px;top:154.00px;font-size:8.5px;line-height:8.5px;letter-spacing:-0.334px;color:#4a4a4a;-webkit-text-stroke:0;">19</div>
<div class="t" style="left:2.70px;top:196.60px;font-size:8.5px;line-height:8.5px;letter-spacing:-0.134px;color:#555;transform:rotate(-90deg);transform-origin:4.60px 4.10px;">17</div>
<div class="t" style="left:2.70px;top:232.95px;font-size:8.5px;line-height:8.5px;letter-spacing:-0.134px;color:#555;transform:rotate(-90deg);transform-origin:4.60px 4.10px;">18</div>
<div class="t" style="left:2.70px;top:269.30px;font-size:8.5px;line-height:8.5px;letter-spacing:-0.134px;color:#555;transform:rotate(-90deg);transform-origin:4.60px 4.10px;">19</div>
<div class="t" style="left:2.70px;top:305.65px;font-size:8.5px;line-height:8.5px;letter-spacing:-0.134px;color:#555;transform:rotate(-90deg);transform-origin:4.60px 4.10px;">20</div>
<div class="t" style="left:2.70px;top:342.00px;font-size:8.5px;line-height:8.5px;letter-spacing:-0.134px;color:#555;transform:rotate(-90deg);transform-origin:4.60px 4.10px;">21</div>
<div class="t" style="left:2.70px;top:378.35px;font-size:8.5px;line-height:8.5px;letter-spacing:-0.134px;color:#555;transform:rotate(-90deg);transform-origin:4.60px 4.10px;">22</div>
<div class="t" style="left:2.70px;top:451.05px;font-size:8.5px;line-height:8.5px;letter-spacing:-0.134px;color:#555;transform:rotate(-90deg);transform-origin:4.60px 4.10px;">24</div>
<div class="t" style="left:2.70px;top:487.40px;font-size:8.5px;line-height:8.5px;letter-spacing:-0.134px;color:#555;transform:rotate(-90deg);transform-origin:4.60px 4.10px;">25</div>
<div style="left:186px;top:92.900px;width:15px;height:1px;background:#444"></div>
</div>
</body></html>
